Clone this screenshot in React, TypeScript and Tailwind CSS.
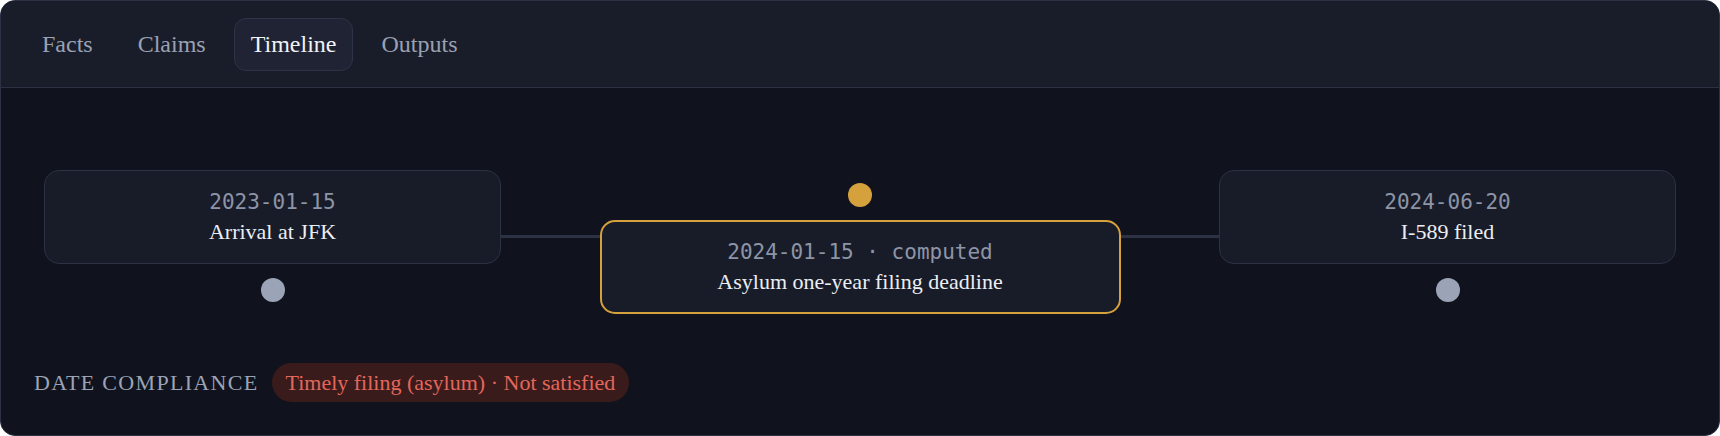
const tabs = ['Facts', 'Claims', 'Timeline', 'Outputs']

interface TimelineEvent {
  date: string
  label: string
  computed?: boolean
}

const events: TimelineEvent[] = [
  { date: '2023-01-15', label: 'Arrival at JFK' },
  { date: '2024-01-15', label: 'Asylum one-year filing deadline', computed: true },
  { date: '2024-06-20', label: 'I-589 filed' },
]

const serif = { fontFamily: '"Liberation Serif", "Times New Roman", serif' }

function EventCard({ event }: { event: TimelineEvent }) {
  return (
    <div
      className={
        event.computed
          ? 'w-[521px] h-[94px] rounded-[15px] border-2 border-[#d5a13d] bg-[#181c29] flex flex-col items-center justify-center'
          : 'w-[457px] h-[94px] rounded-[15px] border border-[#2c3244] bg-[#181c29] flex flex-col items-center justify-center'
      }
    >
      <div className="font-['DejaVu_Sans_Mono',monospace] text-[21px] leading-[30px] text-[#8d94a6]">
        {event.computed ? `${event.date} · computed` : event.date}
      </div>
      <div className="text-[22px] leading-[30px] text-[#eceef3]">{event.label}</div>
    </div>
  )
}

function Dot({ gold }: { gold?: boolean }) {
  return (
    <div className={gold ? 'w-6 h-6 rounded-full bg-[#d5a13d]' : 'w-6 h-6 rounded-full bg-[#9ba3b6]'} />
  )
}

function Connector() {
  return <div className="flex-1 h-[3px] mt-[65px] bg-[#2c3244]" />
}

export default function App() {
  const [first, middle, last] = events

  return (
    <div
      style={serif}
      className="w-full h-[436px] rounded-[15px] border border-[#2c3244] bg-[#10131e] overflow-hidden flex flex-col"
    >
      <div className="h-[87px] shrink-0 flex items-center gap-[11px] pl-[24px] bg-[#191d2a] border-b border-[#2c3244]">
        {tabs.map(tab => (
          <div
            key={tab}
            className={
              tab === 'Timeline'
                ? 'h-[53px] px-[16px] flex items-center rounded-[12px] border border-[#2e3447] bg-[#1f2334] text-[24px] text-[#f1f2f6]'
                : 'h-[53px] px-[16px] flex items-center rounded-[12px] border border-transparent text-[24px] text-[#9aa1b3]'
            }
          >
            {tab}
          </div>
        ))}
      </div>

      <div className="flex-1 px-[33px]">
        <div className="mt-[82px] px-[10px] flex items-start">
          <div className="flex flex-col items-center gap-[14px]">
            <EventCard event={first} />
            <Dot />
          </div>
          <Connector />
          <div className="mt-[13px] flex flex-col items-center gap-[13px]">
            <Dot gold />
            <EventCard event={middle} />
          </div>
          <Connector />
          <div className="flex flex-col items-center gap-[14px]">
            <EventCard event={last} />
            <Dot />
          </div>
        </div>

        <div className="mt-[49px] flex items-center gap-[13px]">
          <span className="text-[22px] uppercase tracking-[0.06em] text-[#9ca3b5]">Date compliance</span>
          <span className="h-[39px] px-[14px] flex items-center rounded-full bg-[#3a1b1b] text-[22px] text-[#e3675b]">
            Timely filing (asylum) · Not satisfied
          </span>
        </div>
      </div>
    </div>
  )
}
